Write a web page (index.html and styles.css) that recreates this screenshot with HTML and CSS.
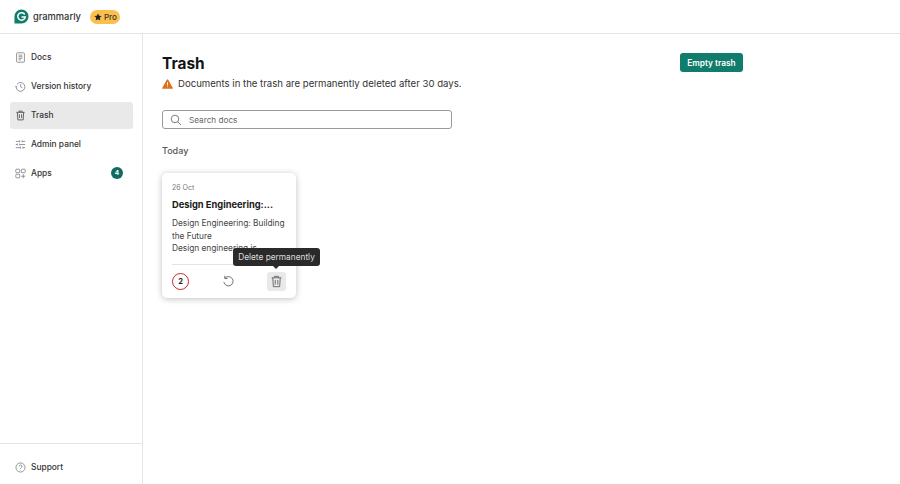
FILE: index.html
```html
<!DOCTYPE html>
<html lang="en">
<head>
<meta charset="utf-8">
<title>Trash</title>
<link rel="stylesheet" href="styles.css">
</head>
<body>
<header class="topbar">
  <svg class="logo" viewBox="0 0 16 16" width="15" height="15"><path d="M8 .5a7.5 7.5 0 1 1 0 15H.5V8A7.5 7.5 0 0 1 8 .5z" fill="#0f7c6c"/><path d="M11 5.2A4 4 0 1 0 12 8.6H8.6" fill="none" stroke="#fff" stroke-width="1.6" stroke-linecap="round"/></svg>
  <span class="brand">grammarly</span>
  <span class="pro"><svg viewBox="0 0 12 12" width="8" height="8"><path d="M6 .6l1.7 3.5 3.8.5-2.8 2.7.7 3.8L6 9.3l-3.4 1.8.7-3.8L.5 4.6l3.8-.5z" fill="#1f1f1f"/></svg>Pro</span>
</header>
<div class="shell">
  <aside class="sidebar">
    <nav class="nav">
      <a class="item"><svg class="ico" viewBox="0 0 14 14"><rect x="2" y="1" width="10" height="12" rx="1.2"/><path d="M4.5 4h5M4.5 6h5M4.5 8h5M4.5 10h3"/></svg>Docs</a>
      <a class="item"><svg class="ico" viewBox="0 0 14 14"><path d="M2.5 4.2A5.6 5.6 0 1 1 1.4 7.6"/><path d="M.6 6.4l1 1.3 1.4-1M7.2 4v3.4l2.2 1.2"/></svg>Version history</a>
      <a class="item active"><svg class="ico dark" viewBox="0 0 14 14"><path d="M1.8 3h10.4M5 3V1.4h4V3M3 3l.6 9.6h6.8L11 3M5.6 5.4v5M8.4 5.4v5"/></svg>Trash</a>
      <a class="item"><svg class="ico" viewBox="0 0 14 14"><path d="M1 3h5M9 3h4M1 7h2M6 7h7M1 11h6M10 11h3M6 1.8v2.4M9 1.8v2.4M3 5.8v2.4M6 5.8v2.4M7 9.8v2.4M10 9.8v2.4"/></svg>Admin panel</a>
      <a class="item"><svg class="ico" viewBox="0 0 14 14"><rect x="1" y="1.5" width="5" height="4.5" rx="1"/><rect x="8" y="1.5" width="5" height="4.5" rx="1"/><rect x="1" y="8" width="5" height="4.5" rx="1"/><path d="M10.5 8v5M8 10.5h5"/></svg>Apps<span class="count">4</span></a>
    </nav>
    <div class="support">
      <a class="item"><svg class="ico" viewBox="0 0 14 14"><circle cx="7" cy="7" r="5.8"/><path d="M5.3 5.6a1.8 1.8 0 1 1 2.6 1.6c-.6.3-.9.7-.9 1.3M7 10.2v.4"/></svg>Support</a>
    </div>
  </aside>
  <main class="main">
    <div class="head">
      <div>
        <h1 class="title">Trash</h1>
        <p class="notice"><svg viewBox="0 0 12 11" width="11" height="10"><path d="M6 .4a.9.9 0 0 1 .8.5l4.9 8.6a.9.9 0 0 1-.8 1.3H1.1a.9.9 0 0 1-.8-1.3L5.2.9A.9.9 0 0 1 6 .4z" fill="#e0701c"/><path d="M6 3.6v3.4M6 8.2v.7" stroke="#fff" stroke-width="1.1"/></svg>Documents in the trash are permanently deleted after 30 days.</p>
      </div>
      <button class="empty">Empty trash</button>
    </div>
    <label class="search"><svg viewBox="0 0 14 14" width="12" height="12"><circle cx="5.8" cy="5.8" r="4.4"/><path d="M9 9l4 4"/></svg><span>Search docs</span></label>
    <h2 class="day">Today</h2>
    <article class="card">
      <div class="date">26 Oct</div>
      <h3 class="doc">Design Engineering:...</h3>
      <p class="excerpt">Design Engineering: Building the Future<br>Design engineering is</p>
      <div class="actions">
        <span class="score">2</span>
        <svg class="act" viewBox="0 0 14 14" width="13" height="13"><path d="M3.2 3.4A5 5 0 1 1 2 7.6"/><path d="M3 .8v3h3"/></svg>
        <span class="del"><svg class="act" viewBox="0 0 14 14" width="13" height="13"><path d="M1.8 3h10.4M5 3V1.4h4V3M3 3l.6 9.6h6.8L11 3M5.6 5.4v5M8.4 5.4v5"/></svg></span>
      </div>
      <div class="tip">Delete permanently</div>
    </article>
  </main>
</div>
</body>
</html>
```
FILE: styles.css
```css
* { box-sizing: border-box; }
html, body { margin: 0; height: 100%; }
body { font-family: Inter, "Liberation Sans", sans-serif; color: #1f1f1f; background: #fff; display: flex; flex-direction: column; height: 484px; overflow: hidden; }
.topbar { height: 34px; flex: none; border-bottom: 1px solid #e4e4e4; display: flex; align-items: center; padding-left: 14px; }
.logo { flex: none; }
.brand { font-size: 9.3px; font-weight: 500; margin-left: 4px; color: #333; }
.pro { margin-left: 9px; height: 14px; width: 30px; padding-left: 4px; border-radius: 7px; background: #fbc04c; display: flex; align-items: center; gap: 2px; font-size: 8px; font-weight: 500; color: #333; }
.shell { flex: 1; display: flex; min-height: 0; }
.sidebar { width: 143px; flex: none; border-right: 1px solid #e4e4e4; display: flex; flex-direction: column; justify-content: space-between; }
.nav { padding: 10px 9px 0 10px; display: flex; flex-direction: column; gap: 2px; }
.item { height: 27px; display: flex; align-items: center; gap: 5px; padding: 0 0 1px 5px; border-radius: 3px; font-size: 8.4px; font-weight: 500; color: #333; }
.item.active { background: #e9e9e9; }
.ico { width: 11px; height: 11px; fill: none; stroke: #7a7a7a; stroke-width: 1; flex: none; }
.ico.dark { stroke: #444; }
.count { margin-left: auto; margin-right: 10px; width: 12px; height: 12px; border-radius: 50%; background: #0f6b5f; color: #fff; font-size: 6.5px; font-weight: 700; display: flex; align-items: center; justify-content: center; }
.support { border-top: 1px solid #e4e4e4; height: 41px; padding: 10px 9px 0 10px; }
.main { flex: 1; padding: 19px 157px 0 19px; }
.head { display: flex; justify-content: space-between; align-items: flex-start; }
.title { margin: 0; font-size: 15.4px; line-height: 21px; font-weight: 700; color: #141414; }
.notice { margin: 3px 0 0; display: flex; align-items: center; gap: 5px; font-size: 9.6px; line-height: 14px; color: #333; }
.empty { border: 0; width: 63px; height: 19px; border-radius: 3px; background: #0f7c6c; color: #fff; font: 600 8.3px Inter, sans-serif; padding: 0; }
.search { margin-top: 19px; width: 290px; height: 19px; border: 1px solid #9a9a9a; border-radius: 3px; display: flex; align-items: center; padding-left: 7px; gap: 7px; font-size: 8.2px; color: #666; }
.search svg { fill: none; stroke: #666; stroke-width: 1; }
.day { margin: 15px 0 0; font-size: 9px; line-height: 14px; font-weight: 500; color: #555; }
.card { position: relative; margin-top: 15px; width: 134px; height: 125px; border-radius: 5px; background: #fff; box-shadow: 0 1px 6px rgba(0,0,0,.25); padding: 10px 10px 0; display: flex; flex-direction: column; }
.date { font-size: 7px; line-height: 9px; color: #777; }
.doc { margin: 6px 0 0; font-size: 9.3px; line-height: 13px; font-weight: 700; color: #1a1a1a; }
.excerpt { margin: 6px 0 0; font-size: 8.3px; line-height: 12.5px; color: #444; height: 38px; overflow: hidden; }
.actions { margin-top: 9px; border-top: 1px solid #e4e4e4; padding-top: 7px; display: flex; align-items: center; justify-content: space-between; }
.score { width: 17px; height: 17px; border: 1.5px solid #c4272d; border-radius: 50%; display: flex; align-items: center; justify-content: center; font-size: 7.5px; font-weight: 700; }
.act { fill: none; stroke: #666; stroke-width: 1; }
.del { width: 19px; height: 19px; border-radius: 3px; background: #e9e9e9; display: flex; align-items: center; justify-content: center; }
.tip { position: absolute; left: 71px; top: 75px; width: 87px; height: 18px; border-radius: 3px; background: #2a2a2a; color: #ddd; font-size: 8.3px; display: flex; align-items: center; justify-content: center; white-space: nowrap; }
.tip::after { content: ""; position: absolute; left: 40px; bottom: -3px; border: 3px solid transparent; border-bottom: 0; border-top-color: #2a2a2a; }
```
